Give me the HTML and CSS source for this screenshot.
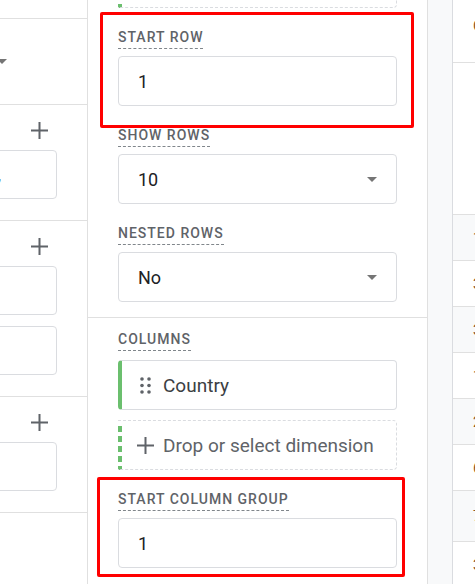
FILE: index.html
```html
<!DOCTYPE html>
<html lang="en">
<head>
    <meta charset="UTF-8">
    <meta name="viewport" content="width=device-width, initial-scale=1.0">
    <title>Explore - Tab settings</title>
    <link rel="stylesheet" href="styles.css">
</head>
<body>
    <div class="workspace">
        <!-- variables column, scrolled sideways so only its right edge shows -->
        <aside class="panel-left">
            <div class="left-inner">
                <div class="left-section left-top"></div>
                <div class="left-section left-plain">
                    <div class="plain-select">
                        <span class="caret"></span>
                    </div>
                </div>
                <div class="left-section">
                    <div class="label-row">
                        <svg class="add-icon" viewBox="0 0 17 17"><path d="M8.5 0v17M0 8.5h17"/></svg>
                    </div>
                    <div class="box"><span class="box-text">,</span></div>
                </div>
                <div class="left-section">
                    <div class="label-row">
                        <svg class="add-icon" viewBox="0 0 17 17"><path d="M8.5 0v17M0 8.5h17"/></svg>
                    </div>
                    <div class="box"></div>
                    <div class="box"></div>
                </div>
                <div class="left-section">
                    <div class="label-row">
                        <svg class="add-icon" viewBox="0 0 17 17"><path d="M8.5 0v17M0 8.5h17"/></svg>
                    </div>
                    <div class="box"></div>
                </div>
            </div>
        </aside>

        <!-- tab settings column -->
        <main class="panel-mid">
            <div class="section">
                <div class="dropzone dropzone-prev"></div>
                <div class="field">
                    <span class="label">Start row</span>
                    <div class="input">1</div>
                </div>
                <div class="field">
                    <span class="label">Show rows</span>
                    <div class="input">10<span class="caret"></span></div>
                </div>
                <div class="field">
                    <span class="label">Nested rows</span>
                    <div class="input">No<span class="caret"></span></div>
                </div>
            </div>
            <div class="section section-cols">
                <div class="field field-list">
                    <span class="label">Columns</span>
                    <div class="chips">
                        <div class="chip">
                            <svg class="handle" viewBox="0 0 11 17">
                                <circle cx="2" cy="2" r="1.8"/><circle cx="9" cy="2" r="1.8"/>
                                <circle cx="2" cy="8.5" r="1.8"/><circle cx="9" cy="8.5" r="1.8"/>
                                <circle cx="2" cy="15" r="1.8"/><circle cx="9" cy="15" r="1.8"/>
                            </svg>
                            <span>Country</span>
                        </div>
                        <div class="dropzone">
                            <svg class="plus" viewBox="0 0 17 17"><path d="M8.5 0v17M0 8.5h17"/></svg>
                            <span>Drop or select dimension</span>
                        </div>
                    </div>
                </div>
                <div class="field">
                    <span class="label">Start column group</span>
                    <div class="input">1</div>
                </div>
            </div>
        </main>

        <div class="rail"></div>

        <!-- report table, mostly off to the right -->
        <section class="table">
            <div class="row row-head">C</div>
            <div class="row row-sub"></div>
            <div class="row row-alt">1</div>
            <div class="row">3</div>
            <div class="row row-alt">3</div>
            <div class="row">1</div>
            <div class="row row-alt">2</div>
            <div class="row">6</div>
            <div class="row row-alt row-tall">7</div>
            <div class="row">3</div>
        </section>
    </div>

    <div class="callout callout-rows"></div>
    <div class="callout callout-cols"></div>
</body>
</html>
```

FILE: styles.css
```css
*{margin:0;padding:0;box-sizing:border-box;}
body{width:475px;height:584px;overflow:hidden;background:#fff;position:relative;
    font-family:Roboto,"Liberation Sans",Arial,sans-serif;color:#202124;}

.workspace{display:flex;height:584px;}

/* left column */
.panel-left{width:88px;flex:none;overflow:hidden;border-right:1px solid #e0e0e0;}
.left-inner{width:339px;margin-left:-252px;}
.left-section{padding:17px 30px 21px;border-bottom:1px solid #e0e0e0;display:flex;flex-direction:column;gap:11px;}
.left-top{height:19px;padding:0;}
.left-plain{height:86px;padding:17px 30px 0;}
.plain-select{height:50px;display:flex;align-items:center;padding-left:219px;}
.label-row{height:17px;display:flex;justify-content:flex-end;margin-bottom:0;}
.add-icon{width:17px;height:17px;margin-right:9px;stroke:#5f6368;stroke-width:2;fill:none;}
.box{height:49px;border:1px solid #dadce0;border-radius:4px;display:flex;align-items:center;justify-content:flex-end;padding-right:55px;font-size:18px;}
.box-text{color:#202124;}

/* middle column */
.panel-mid{width:340px;flex:none;border-right:1px solid #e0e0e0;overflow:hidden;}
.section{display:flex;flex-direction:column;gap:20px;padding:0 30px 15px;border-bottom:1px solid #e0e0e0;}
.section-cols{padding-top:12px;border-bottom:none;}

.field{display:flex;flex-direction:column;gap:7px;}
.field-list{gap:9px;}
.label{align-self:flex-start;font-size:14px;line-height:18px;font-weight:500;letter-spacing:1px;text-transform:uppercase;
    color:#5f6368;padding-bottom:2px;border-bottom:1px dashed #80868b;white-space:nowrap;}
.input{height:50px;border:1px solid #dadce0;border-radius:4px;display:flex;align-items:center;justify-content:space-between;
    padding:0 19px 0 19px;font-size:18px;color:#202124;}
.caret{width:0;height:0;border-left:5px solid transparent;border-right:5px solid transparent;border-top:5px solid #757575;flex:none;}

.chips{display:flex;flex-direction:column;gap:10px;}
.chip{height:50px;border:1px solid #dadce0;border-left:4px solid #6bbf6e;border-radius:4px;display:flex;align-items:center;
    gap:12px;padding-left:18px;font-size:19px;color:#3c4043;}
.handle{width:11px;height:17px;fill:#5f6368;}

.dropzone{height:50px;border:1px dashed #dadce0;border-left:none;border-radius:0 4px 4px 0;display:flex;align-items:center;gap:9px;
    padding-left:19px;font-size:19px;color:#5f6368;
    background:repeating-linear-gradient(to bottom,transparent 0 4px,#6bbf6e 4px 10px) 0 1px / 4px 100% no-repeat;}
.dropzone-prev{margin-top:-42px;}
.plus{width:17px;height:17px;stroke:#5f6368;stroke-width:2;fill:none;flex:none;}

/* collapsed rail */
.rail{width:25px;flex:none;background:#f8f9fa;border-right:1px solid #dadce0;}

/* table */
.table{flex:1;overflow:hidden;}
.row{height:46px;border-bottom:1px solid #e0e0e0;display:flex;align-items:center;padding-left:20px;
    font-size:14px;color:#8a5424;white-space:nowrap;}
.row-head{height:63px;align-items:flex-start;padding-top:17px;font-size:15px;}
.row-sub{height:152px;}
.row-alt{background:#f8f9fa;}
.row-tall{height:51px;}

/* highlight frames drawn over the settings */
.callout{position:absolute;border:3px solid #ff0000;border-radius:2px;}
.callout-rows{left:100px;top:12px;width:314px;height:116px;}
.callout-cols{left:97px;top:477px;width:308px;height:100px;}
```
